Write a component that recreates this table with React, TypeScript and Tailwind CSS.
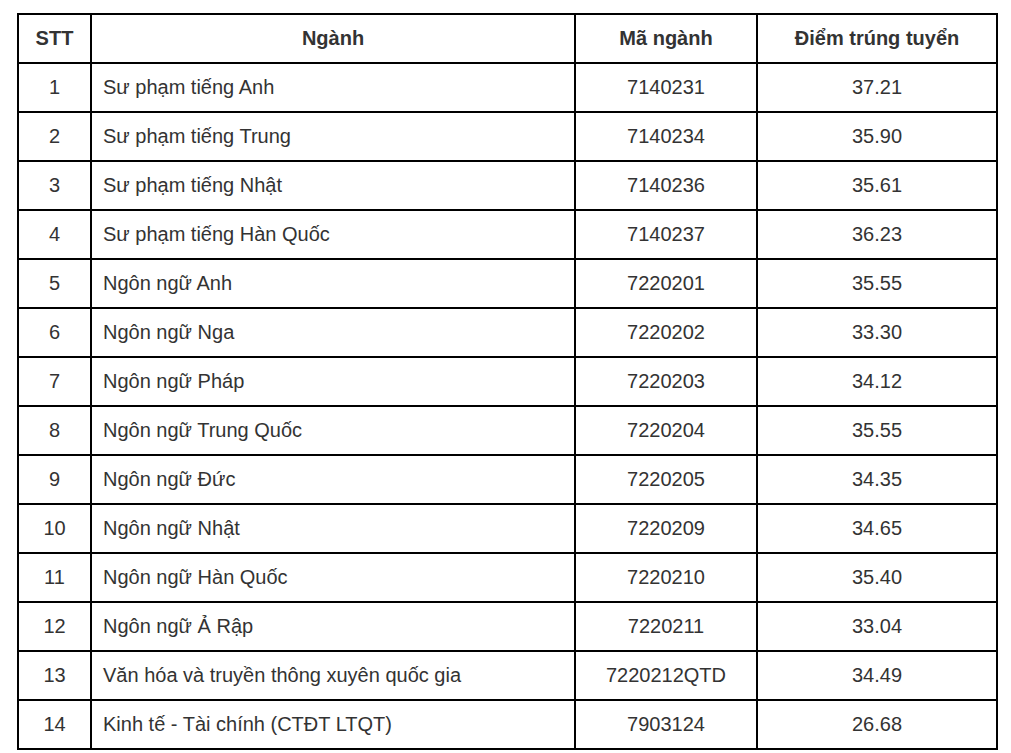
import React from 'react';

const rows: [string, string, string, string][] = [
    ['1', 'Sư phạm tiếng Anh', '7140231', '37.21'],
    ['2', 'Sư phạm tiếng Trung', '7140234', '35.90'],
    ['3', 'Sư phạm tiếng Nhật', '7140236', '35.61'],
    ['4', 'Sư phạm tiếng Hàn Quốc', '7140237', '36.23'],
    ['5', 'Ngôn ngữ Anh', '7220201', '35.55'],
    ['6', 'Ngôn ngữ Nga', '7220202', '33.30'],
    ['7', 'Ngôn ngữ Pháp', '7220203', '34.12'],
    ['8', 'Ngôn ngữ Trung Quốc', '7220204', '35.55'],
    ['9', 'Ngôn ngữ Đức', '7220205', '34.35'],
    ['10', 'Ngôn ngữ Nhật', '7220209', '34.65'],
    ['11', 'Ngôn ngữ Hàn Quốc', '7220210', '35.40'],
    ['12', 'Ngôn ngữ Ả Rập', '7220211', '33.04'],
    ['13', 'Văn hóa và truyền thông xuyên quốc gia', '7220212QTD', '34.49'],
    ['14', 'Kinh tế - Tài chính (CTĐT LTQT)', '7903124', '26.68'],
];

export default function App() {
    return (
        <div className="min-h-screen bg-white pt-[13px] pl-[17px] font-['Liberation_Sans',Arial,sans-serif] text-[#333] text-[20px]">
            <table className="w-[981px] table-fixed border-collapse">
                <colgroup>
                    <col className="w-[73px]" />
                    <col className="w-[484px]" />
                    <col className="w-[182px]" />
                    <col className="w-[240px]" />
                </colgroup>
                <thead>
                    <tr className="h-[49px]">
                        <th className="border-2 border-black pb-[2px] text-center font-bold">STT</th>
                        <th className="border-2 border-black pb-[2px] text-center font-bold">Ngành</th>
                        <th className="border-2 border-black pb-[2px] text-center font-bold">Mã ngành</th>
                        <th className="border-2 border-black pb-[2px] text-center font-bold">Điểm trúng tuyển</th>
                    </tr>
                </thead>
                <tbody>
                    {rows.map(([stt, name, code, score]) => (
                        <tr key={stt} className="h-[49px]">
                            <td className="border-2 border-black pb-[2px] text-center">{stt}</td>
                            <td className="border-2 border-black pb-[2px] pl-[11px]">{name}</td>
                            <td className="border-2 border-black pb-[2px] text-center">{code}</td>
                            <td className="border-2 border-black pb-[2px] text-center">{score}</td>
                        </tr>
                    ))}
                </tbody>
            </table>
        </div>
    );
}
